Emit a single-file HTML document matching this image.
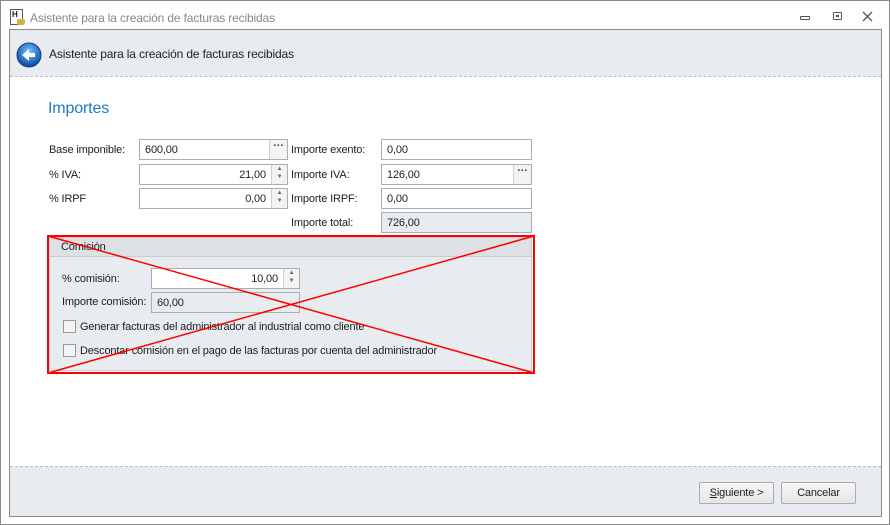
<!DOCTYPE html>
<html><head><meta charset="utf-8"><style>
*{box-sizing:border-box;margin:0;padding:0}
body{width:890px;height:525px;background:#fff;font-family:"Liberation Sans",sans-serif;font-size:11px;color:#1e1e1e;position:relative;overflow:hidden;letter-spacing:-0.15px}
.a{position:absolute}
.win{left:0;top:0;width:890px;height:525px;border:1px solid #8a8a8a}
.panel{left:9px;top:29px;width:873px;height:488px;border:1px solid #8a8a8a;background:#e8ebef}
.inp{position:absolute;height:21px;border:1px solid #abadb3;background:#fff;padding:4px 5px 3px;font-size:11px}
.lbl{position:absolute;font-size:11px}
.spin{position:absolute;right:0;top:0;width:16px;height:19px;border-left:1px solid #d0d0d0;background:#f3f3f3;font-size:6px;color:#666;text-align:center;line-height:8px}
.dots{position:absolute;right:0;top:0;width:18px;height:19px;border-left:1px solid #d0d0d0;background:#f3f3f3;text-align:center;line-height:13px;font-weight:bold;color:#444}
.cb{position:absolute;width:13px;height:13px;border:1px solid #999;background:#f4f4f4}
.btn{position:absolute;height:22px;border:1px solid #acacac;border-radius:2px;background:linear-gradient(#f6f6f6,#e6e6e6);text-align:center;line-height:20px;font-size:11px}
</style></head><body>
<div class="a win"></div>
<div class="a" style="left:10px;top:9px;width:13px;height:16px;border:1px solid #555;background:#fff;font-size:8px;font-weight:bold;line-height:9px;padding-left:1px">H</div>
<div class="a" style="left:17px;top:19px;width:8px;height:6px;background:#d8b040;border-radius:2px"></div>
<div class="lbl" style="left:30px;top:11px;color:#888;font-size:12px">Asistente para la creación de facturas recibidas</div>
<div class="a" style="left:800px;top:16px;width:10px;height:4px;border:1px solid #555;border-radius:1px"></div>
<div class="a" style="left:833px;top:12px;width:9px;height:8px;border:1px solid #555;border-radius:1px"><div style="margin:2px auto;width:3px;height:2px;border:1px solid #555"></div></div>
<svg class="a" style="left:862px;top:11px" width="11" height="11"><path d="M1 1L10 10M10 1L1 10" stroke="#555" stroke-width="1.3"/></svg>
<div class="a panel"></div>
<svg class="a" style="left:16px;top:42px" width="26" height="26"><defs><radialGradient id="g" cx="50%" cy="35%" r="60%"><stop offset="0" stop-color="#7cc3ff"/><stop offset="1" stop-color="#0b4fa8"/></radialGradient></defs><circle cx="13" cy="13" r="12" fill="url(#g)" stroke="#1a3f7a"/><path d="M6 13 L13 7 L13 11 L19 11 L19 15 L13 15 L13 19 Z" fill="#fff"/></svg>
<div class="lbl" style="left:49px;top:47px;font-size:12px;color:#222">Asistente para la creación de facturas recibidas</div>
<div class="a" style="left:10px;top:76px;width:871px;height:391px;background:#fff;border-top:1px dashed #bbb;border-bottom:1px dashed #bbb"></div>
<div class="lbl" style="left:48px;top:100px;font-size:16px;color:#1e7ac8">Importes</div>

<div class="lbl" style="left:49px;top:144px">Base imponible:</div>
<div class="inp" style="left:139px;top:139px;width:149px">600,00<div class="dots">···</div></div>
<div class="lbl" style="left:49px;top:169px">% IVA:</div>
<div class="inp" style="left:139px;top:164px;width:149px;text-align:right;padding-right:21px">21,00<div class="spin">▲<br>▼</div></div>
<div class="lbl" style="left:49px;top:193px">% IRPF</div>
<div class="inp" style="left:139px;top:188px;width:149px;text-align:right;padding-right:21px">0,00<div class="spin">▲<br>▼</div></div>

<div class="lbl" style="left:291px;top:144px">Importe exento:</div>
<div class="inp" style="left:381px;top:139px;width:151px">0,00</div>
<div class="lbl" style="left:291px;top:169px">Importe IVA:</div>
<div class="inp" style="left:381px;top:164px;width:151px">126,00<div class="dots">···</div></div>
<div class="lbl" style="left:291px;top:193px">Importe IRPF:</div>
<div class="inp" style="left:381px;top:188px;width:151px">0,00</div>
<div class="lbl" style="left:291px;top:217px">Importe total:</div>
<div class="inp" style="left:381px;top:212px;width:151px;background:#e8ebef">726,00</div>

<div class="a" style="left:49px;top:237px;width:483px;height:134px;background:#e8ebef;border:1px solid #c8ccd2"></div>
<div class="a" style="left:50px;top:238px;width:481px;height:19px;background:#dde0e5;border-bottom:1px solid #c8ccd2"></div>
<div class="lbl" style="left:61px;top:241px">Comisión</div>
<div class="lbl" style="left:62px;top:273px">% comisión:</div>
<div class="inp" style="left:151px;top:268px;width:149px;text-align:right;padding-right:21px">10,00<div class="spin">▲<br>▼</div></div>
<div class="lbl" style="left:62px;top:296px">Importe comisión:</div>
<div class="inp" style="left:151px;top:292px;width:149px;background:#e8ebef">60,00</div>
<div class="cb" style="left:63px;top:320px"></div>
<div class="lbl" style="left:80px;top:321px">Generar facturas del administrador al industrial como cliente</div>
<div class="cb" style="left:63px;top:344px"></div>
<div class="lbl" style="left:80px;top:345px">Descontar comisión en el pago de las facturas por cuenta del administrador</div>
<svg class="a" style="left:47px;top:235px" width="488" height="139"><rect x="1" y="1" width="486" height="137" fill="none" stroke="#f00" stroke-width="2"/><line x1="1" y1="1" x2="487" y2="138" stroke="#f00" stroke-width="1.5"/><line x1="1" y1="138" x2="487" y2="1" stroke="#f00" stroke-width="1.5"/></svg>

<div class="btn" style="left:699px;top:482px;width:75px"><u>S</u>iguiente &gt;</div>
<div class="btn" style="left:781px;top:482px;width:75px">Cancelar</div>
</body></html>
